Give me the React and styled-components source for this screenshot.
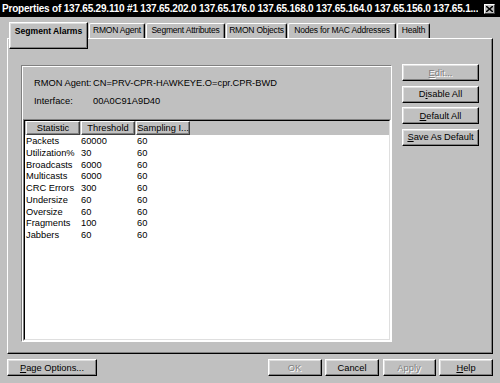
import React from 'react';
import styled, { createGlobalStyle } from 'styled-components';

const sans = '"Liberation Sans", Arial, sans-serif';

const GlobalStyle = createGlobalStyle`
   html, body {
      margin: 0;
      padding: 0;
      background: #c0c0c0;
   }
   body {
      font-family: ${sans};
      font-size: 9.3px;
      color: #000;
   }
`;

const tabs = [
   { label: 'Segment Alarms', width: 79, active: true },
   { label: 'RMON Agent', width: 56 },
   { label: 'Segment Attributes', width: 79 },
   { label: 'RMON Objects', width: 61 },
   { label: 'Nodes for MAC Addresses', width: 108 },
   { label: 'Health', width: 33 },
];

const alarms = [
   ['Packets', '60000', '60'],
   ['Utilization%', '30', '60'],
   ['Broadcasts', '6000', '60'],
   ['Multicasts', '6000', '60'],
   ['CRC Errors', '300', '60'],
   ['Undersize', '60', '60'],
   ['Oversize', '60', '60'],
   ['Fragments', '100', '60'],
   ['Jabbers', '60', '60'],
];

const App = () => {
   return (
      <>
         <GlobalStyle />
         <Window>
            <TitleBar>
               <TitleText>
                  Properties of 137.65.29.110 #1 137.65.202.0 137.65.176.0
                  137.65.168.0 137.65.164.0 137.65.156.0 137.65.1...
               </TitleText>
               <CloseBox>
                  <svg width='7' height='6' viewBox='0 0 7 6'>
                     <path d='M0 0 L7 6 M7 0 L0 6' stroke='#000' strokeWidth='1.5' />
                  </svg>
               </CloseBox>
            </TitleBar>
            <Body>
               <TabStrip>
                  {tabs.map((t) =>
                     t.active ? (
                        <ActiveTab key={t.label} $w={t.width}>
                           {t.label}
                        </ActiveTab>
                     ) : (
                        <Tab key={t.label} $w={t.width}>
                           {t.label}
                        </Tab>
                     )
                  )}
               </TabStrip>
               <Panel>
                  <GroupBox>
                     <InfoRow>
                        <InfoLabel>RMON Agent:</InfoLabel>
                        <span>CN=PRV-CPR-HAWKEYE.O=cpr.CPR-BWD</span>
                     </InfoRow>
                     <InfoRow>
                        <InfoLabel>Interface:</InfoLabel>
                        <span>00A0C91A9D40</span>
                     </InfoRow>
                     <TableOuter>
                        <TableInner>
                           <HeaderRow>
                              <HeaderCell>Statistic</HeaderCell>
                              <HeaderCell>Threshold</HeaderCell>
                              <HeaderCell>Sampling I...</HeaderCell>
                           </HeaderRow>
                           <Rows>
                              {alarms.map((r) => (
                                 <Row key={r[0]}>
                                    <span>{r[0]}</span>
                                    <span>{r[1]}</span>
                                    <span>{r[2]}</span>
                                 </Row>
                              ))}
                           </Rows>
                        </TableInner>
                     </TableOuter>
                  </GroupBox>
                  <SideButtons>
                     <Button $disabled>
                        <u>E</u>dit...
                     </Button>
                     <Button>
                        D<u>i</u>sable All
                     </Button>
                     <Button>
                        <u>D</u>efault All
                     </Button>
                     <Button>
                        <u>S</u>ave As Default
                     </Button>
                  </SideButtons>
               </Panel>
               <Footer>
                  <Button $w={90}>
                     <u>P</u>age Options...
                  </Button>
                  <FooterRight>
                     <Button $w={54} $disabled>
                        OK
                     </Button>
                     <Button $w={54}>Cancel</Button>
                     <Button $w={53} $disabled>
                        Apply
                     </Button>
                     <Button $w={54}>
                        <u>H</u>elp
                     </Button>
                  </FooterRight>
               </Footer>
            </Body>
         </Window>
      </>
   );
};

export default App;

const Window = styled.div`
   width: 500px;
   height: 383px;
   box-sizing: border-box;
   background: #c0c0c0;
   display: flex;
   flex-direction: column;
   overflow: hidden;
`;

const TitleBar = styled.div`
   height: 17px;
   background: #000;
   display: flex;
   align-items: center;
   padding: 0 5px 0 2px;
   gap: 6px;
`;

const TitleText = styled.div`
   flex: 1;
   color: #fff;
   font-weight: bold;
   font-size: 10px;
   letter-spacing: -0.2px;
   white-space: nowrap;
   overflow: hidden;
`;

const CloseBox = styled.div`
   width: 11px;
   height: 10px;
   box-sizing: border-box;
   background: #c0c0c0;
   border: 1px solid;
   border-color: #fff #404040 #404040 #fff;
   display: flex;
   align-items: center;
   justify-content: center;
`;

const Body = styled.div`
   flex: 1;
   padding: 5px 7px 0 7px;
   display: flex;
   flex-direction: column;
`;

const TabStrip = styled.div`
   height: 16px;
   display: flex;
   align-items: flex-start;
   gap: 1px;
   padding-left: 2px;
   position: relative;
   z-index: 2;
`;

const Tab = styled.div`
   width: ${(p) => p.$w}px;
   height: 15px;
   margin-top: 1px;
   box-sizing: border-box;
   border: 1px solid;
   border-bottom: none;
   border-color: #fff #000 transparent #fff;
   border-radius: 2px 2px 0 0;
   box-shadow: inset -1px 0 #808080;
   font-size: 8.5px;
   letter-spacing: -0.2px;
   line-height: 13px;
   text-align: center;
   white-space: nowrap;
`;

const ActiveTab = styled.div`
   width: ${(p) => p.$w}px;
   height: 27px;
   box-sizing: border-box;
   background: #c0c0c0;
   border: 1px solid;
   border-color: #fff #000 #000 #fff;
   box-shadow: inset -1px -1px #808080, inset 1px 1px #dfdfdf;
   font-weight: bold;
   font-size: 8.6px;
   line-height: 14px;
   padding-top: 1px;
   text-align: center;
   white-space: nowrap;
`;

const Panel = styled.div`
   height: 316px;
   box-sizing: border-box;
   border: 1px solid;
   border-color: #fff #000 #000 #fff;
   box-shadow: inset -1px -1px #808080;
   padding: 26px 0 0 13px;
   display: flex;
   align-items: flex-start;
   gap: 10px;
   position: relative;
   z-index: 1;
`;

const GroupBox = styled.div`
   width: 371px;
   height: 277px;
   box-sizing: border-box;
   border: 1px solid;
   border-color: #808080 #fff #fff #808080;
   box-shadow: inset 1px 1px #fff;
   padding: 11px 0 0 1px;
   display: flex;
   flex-direction: column;
`;

const InfoRow = styled.div`
   height: 12px;
   line-height: 12px;
   padding-left: 11px;
   margin-bottom: 6px;
   display: flex;
   white-space: nowrap;
`;

const InfoLabel = styled.span`
   width: 59px;
`;

const TableOuter = styled.div`
   flex: 1;
   margin-top: 6px;
   border: 1px solid;
   border-color: #808080 #fff #fff #808080;
   display: flex;
`;

const TableInner = styled.div`
   flex: 1;
   border: 1px solid;
   border-color: #000 #dfdfdf #dfdfdf #000;
   display: flex;
   flex-direction: column;
`;

const HeaderRow = styled.div`
   height: 14px;
   background: #c0c0c0;
   display: flex;
   gap: 1px;
   padding-left: 1px;
`;

const HeaderCell = styled.div`
   width: 54px;
   box-sizing: border-box;
   border: 1px solid;
   border-color: #fff #404040 #404040 #fff;
   box-shadow: inset -1px -1px #808080;
   text-align: center;
   line-height: 12px;
   white-space: nowrap;
`;

const Rows = styled.div`
   flex: 1;
   background: #fff;
   padding-top: 1px;
`;

const Row = styled.div`
   height: 11.75px;
   line-height: 11.75px;
   display: grid;
   grid-template-columns: 55px 56px auto;
   padding-left: 1px;
   white-space: nowrap;
`;

const SideButtons = styled.div`
   width: 77px;
   display: flex;
   flex-direction: column;
   gap: 4.6px;
   margin-top: -1px;
`;

const Button = styled.div`
   width: ${(p) => (p.$w ? `${p.$w}px` : 'auto')};
   height: 17px;
   box-sizing: border-box;
   border: 1px solid;
   border-color: #fff #000 #000 #fff;
   box-shadow: inset -1px -1px #808080, inset 1px 1px #dfdfdf;
   display: flex;
   align-items: center;
   justify-content: center;
   white-space: nowrap;
   color: ${(p) => (p.$disabled ? '#808080' : '#000')};
   text-shadow: ${(p) => (p.$disabled ? '1px 1px #fff' : 'none')};

   u {
      text-underline-offset: 1px;
   }
`;

const Footer = styled.div`
   margin-top: 5px;
   display: flex;
   justify-content: space-between;
`;

const FooterRight = styled.div`
   display: flex;
   gap: 3.5px;
`;
